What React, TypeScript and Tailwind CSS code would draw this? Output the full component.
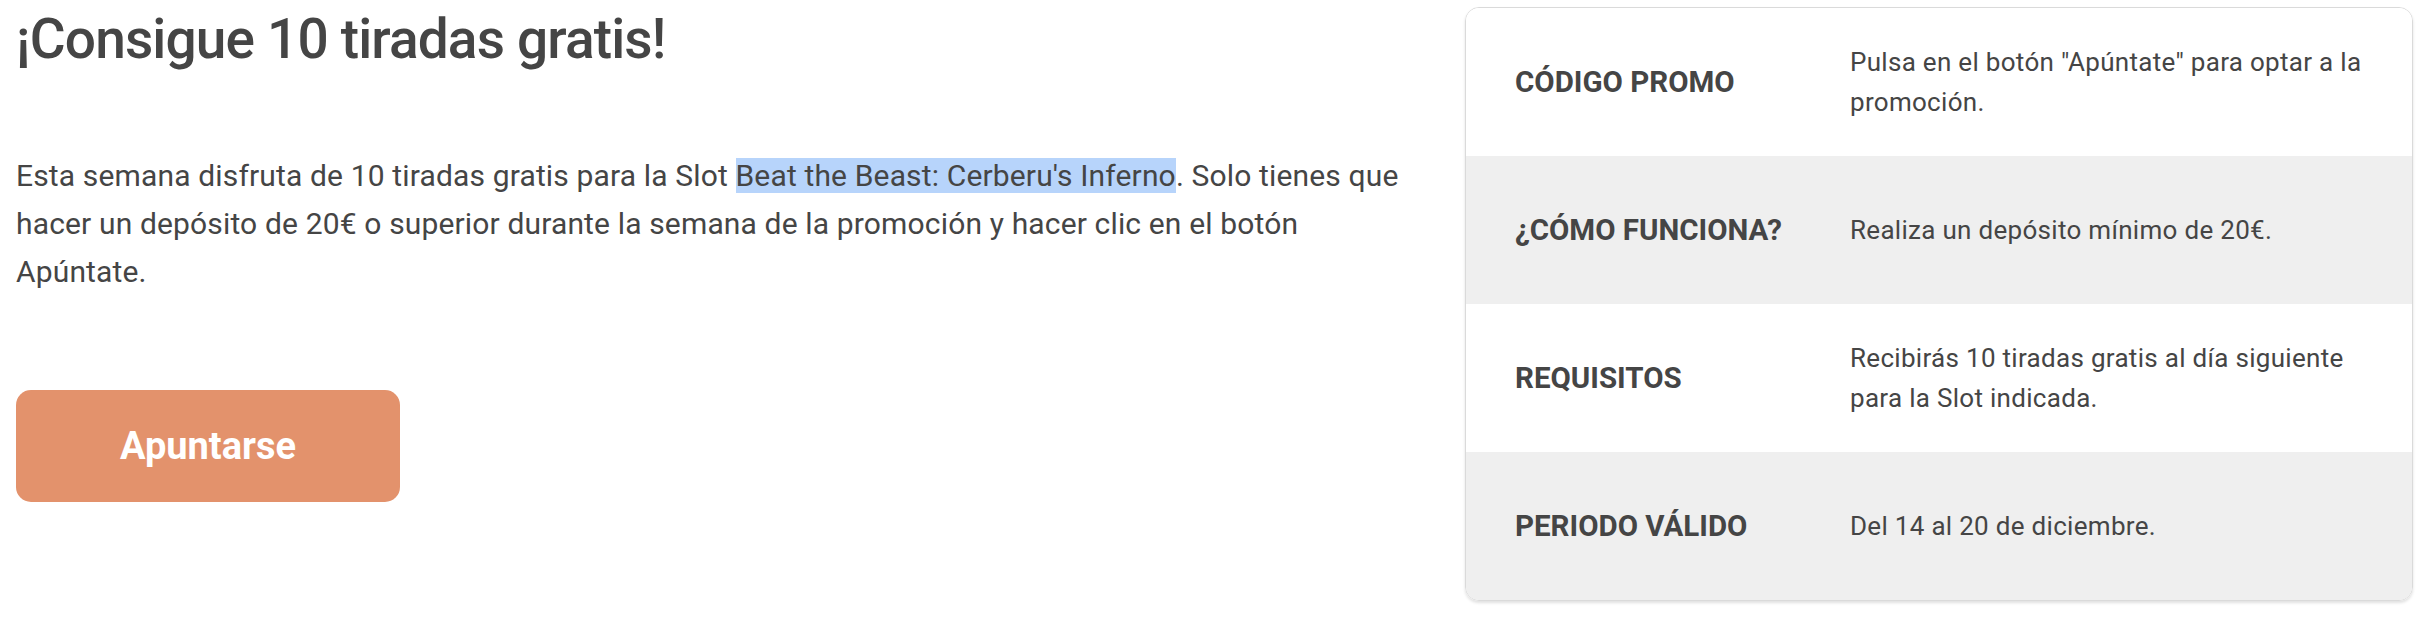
const rows: { label: string; value: string; gray: boolean }[] = [
  { label: 'CÓDIGO PROMO', value: 'Pulsa en el botón "Apúntate" para optar a la promoción.', gray: false },
  { label: '¿CÓMO FUNCIONA?', value: 'Realiza un depósito mínimo de 20€.', gray: true },
  { label: 'REQUISITOS', value: 'Recibirás 10 tiradas gratis al día siguiente para la Slot indicada.', gray: false },
  { label: 'PERIODO VÁLIDO', value: 'Del 14 al 20 de diciembre.', gray: true },
];

export default function App() {
  return (
    <div className="flex w-[2436px] h-[622px] bg-white pt-[6px] pl-4 text-[#454545] font-['Roboto',sans-serif]">
      <div className="w-[1420px] shrink-0">
        <h1 className="font-medium text-[55px] leading-[66px] tracking-[-0.85px]">
          ¡Consigue 10 tiradas gratis!
        </h1>
        <p className="mt-[80px] w-[1400px] text-[30px] leading-[48px] tracking-[0.15px]">
          Esta semana disfruta de 10 tiradas gratis para la Slot{' '}
          <span className="bg-[#b7d4fb]">Beat the Beast: Cerberu's Inferno</span>. Solo tienes que hacer un depósito de 20€
          o superior durante la semana de la promoción y hacer clic en el botón Apúntate.
        </p>
        <button className="mt-[94px] flex h-[112px] w-[384px] items-center justify-center rounded-[15px] bg-[#e3926c] text-[38px] font-bold text-white">
          Apuntarse
        </button>
      </div>
      <div className="ml-[29px] mt-px flex h-[594px] w-[948px] flex-col overflow-hidden rounded-[14px] border border-[#dadada] shadow-[0_2px_3px_rgba(0,0,0,0.12)]">
        {rows.map((r) => (
          <div
            key={r.label}
            className={`flex flex-1 items-center pl-[49px] ${r.gray ? 'bg-[#efefef]' : 'bg-white'}`}
          >
            <div className="w-[335px] shrink-0 text-[29.5px] font-bold">{r.label}</div>
            <div className="w-[530px] text-[26px] leading-[40px] tracking-[0.3px]">{r.value}</div>
          </div>
        ))}
      </div>
    </div>
  );
}
